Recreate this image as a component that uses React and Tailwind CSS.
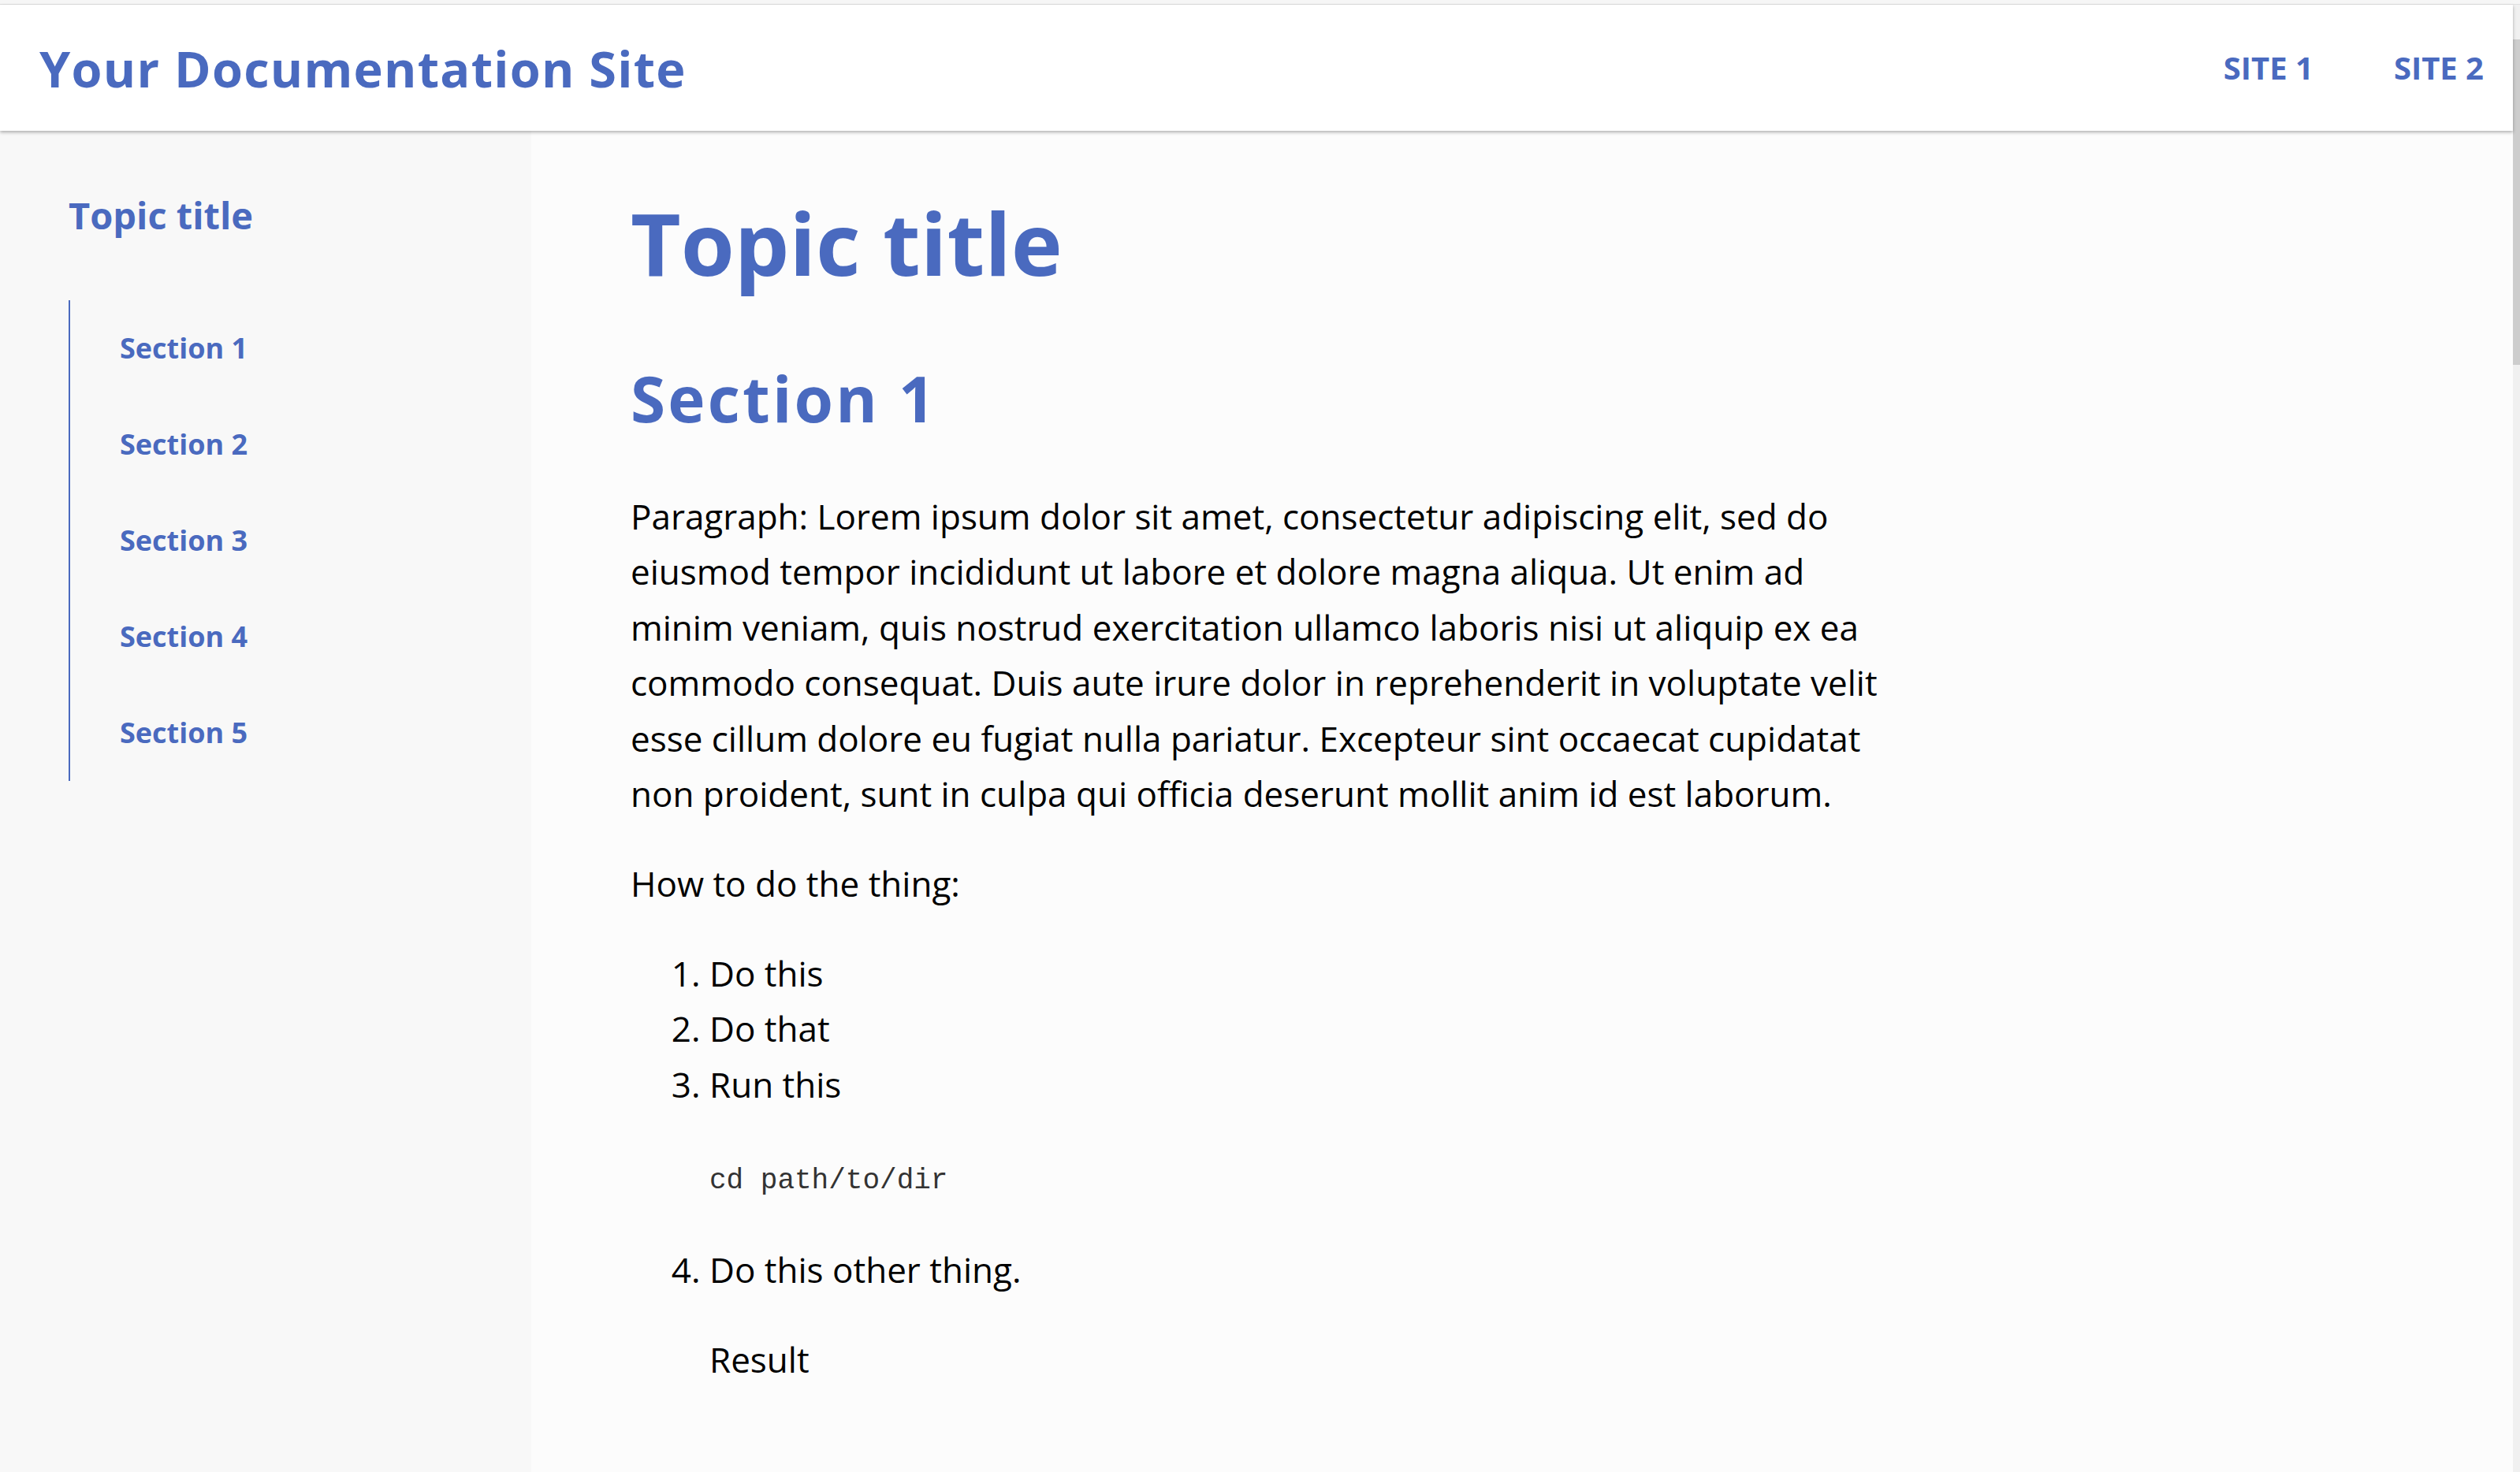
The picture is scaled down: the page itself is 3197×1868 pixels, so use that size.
import React from "react";

const BLUE = "text-[#4a6abf]";

const sections = ["Section 1", "Section 2", "Section 3", "Section 4", "Section 5"];

function Header() {
  return (
    <header className="relative z-10 flex h-[160px] items-center justify-between bg-white pl-[50px] pr-[37px] shadow-[0_2px_4px_rgba(0,0,0,0.3)]">
      <div className={`text-[63px] font-bold tracking-[0.02em] leading-none ${BLUE}`}>
        Your Documentation Site
      </div>
      <nav className={`flex items-center text-[40px] font-bold leading-none ${BLUE}`}>
        <a href="#">SITE 1</a>
        <a href="#" className="ml-[102px]">SITE 2</a>
      </nav>
    </header>
  );
}

function Sidebar() {
  return (
    <aside className="w-[674px] shrink-0 bg-[#f8f8f8] pl-[87px] pt-[77px]">
      <h3 className={`m-0 text-[47px] font-bold leading-[60px] ${BLUE}`}>Topic title</h3>
      <ul className="mt-[78px] border-l-2 border-[#4a6abf] pl-[63px]">
        {sections.map((s) => (
          <li key={s} className={`flex h-[122px] items-center text-[36px] font-bold ${BLUE}`}>
            <a href="#">{s}</a>
          </li>
        ))}
      </ul>
    </aside>
  );
}

function Content() {
  return (
    <main className="flex-1 bg-[#fcfcfc] pl-[126px] pt-[75px] text-black">
      <h1 className={`text-[110px] font-bold leading-[132px] ${BLUE}`}>Topic title</h1>
      <h2 className={`mt-[84px] text-[80px] font-bold leading-[96px] tracking-[0.04em] ${BLUE}`}>Section 1</h2>
      <div className="text-[44px] leading-[70.4px]">
        <p className="mt-[67px] max-w-[1600px]">
          Paragraph: Lorem ipsum dolor sit amet, consectetur adipiscing elit, sed do eiusmod tempor
          incididunt ut labore et dolore magna aliqua. Ut enim ad minim veniam, quis nostrud exercitation
          ullamco laboris nisi ut aliquip ex ea commodo consequat. Duis aute irure dolor in reprehenderit in
          voluptate velit esse cillum dolore eu fugiat nulla pariatur. Excepteur sint occaecat cupidatat non
          proident, sunt in culpa qui officia deserunt mollit anim id est laborum.
        </p>
        <p className="mt-[44px]">How to do the thing:</p>
        <ol className="mt-[43px] list-decimal pl-[100px]">
          <li>Do this</li>
          <li>Do that</li>
          <li>
            Run this
            <pre className="mt-[67px] mb-[57px] font-['Courier_New','Nimbus_Mono_PS',FreeMono,Courier,'Liberation_Mono',monospace] text-[36px] leading-[41px] text-[#333]">
              cd path/to/dir
            </pre>
          </li>
          <li>
            Do this other thing.
            <p className="mt-[44px]">Result</p>
          </li>
        </ol>
      </div>
    </main>
  );
}

export default function App() {
  return (
    <div className="flex h-screen flex-col overflow-hidden bg-[#fcfcfc] font-['Open_Sans',sans-serif]">
      <div className="h-[6px] shrink-0 border-b border-[#e0e0e0] bg-[#f6f6f6]" />
      <div className="flex min-h-0 flex-1">
        <div className="flex min-w-0 flex-1 flex-col">
          <Header />
          <div className="flex min-h-0 flex-1">
            <Sidebar />
            <Content />
          </div>
        </div>
        <div className="w-[9px] shrink-0 bg-[#f0f0f0]">
          <div className="mt-[44px] h-[413px] bg-[#cdcdcd]" />
        </div>
      </div>
    </div>
  );
}
